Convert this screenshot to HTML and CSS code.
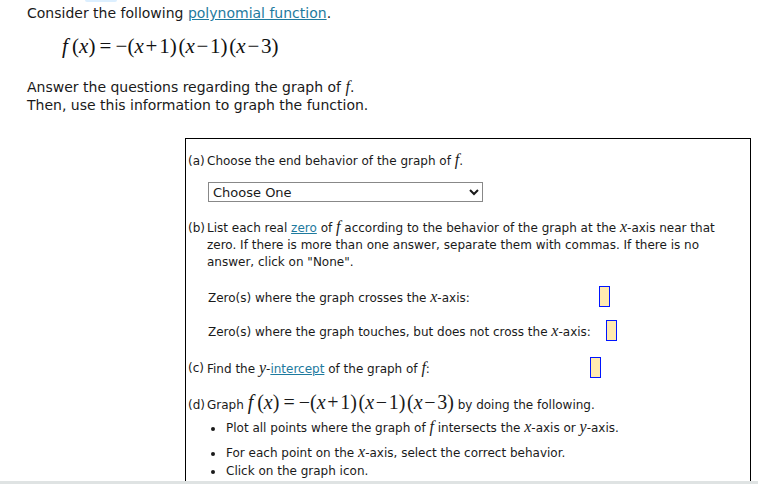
FILE: index.html
```html
<!DOCTYPE html>
<html>
<head>
  <title>Polynomial Function</title>
  <link rel="stylesheet" href="styles.css">
</head>
<body>
  <div class="focus-mark"></div>
  <div class="intro">
    <p class="line">Consider the following <a href="#" class="link">polynomial function</a>.</p>
    <div class="formula">
      <i>f</i>&#8201;(<i>x</i>)&#8201;=&#8201;&minus;(<i>x</i>&#8202;+&#8202;1)&#8202;(<i>x</i>&#8202;&minus;&#8202;1)&#8202;(<i>x</i>&#8202;&minus;&#8202;3)
    </div>
    <p class="line">Answer the questions regarding the graph of <i class="m">f</i>.</p>
    <p class="line">Then, use this information to graph the function.</p>
  </div>

  <div class="panel">
    <div class="part part-a">
      <span class="tag">(a)</span>
      <span>Choose the end behavior of the graph of <i class="m">f</i>.</span>
    </div>
    <select class="choose">
      <option>Choose One</option>
    </select>

    <div class="part part-b">
      <span class="tag">(b)</span>
      <span>List each real <a href="#" class="link">zero</a> of <i class="m">f</i> according to the behavior of the graph at the <i class="m">x</i>-axis near that
        zero. If there is more than one answer, separate them with commas. If there is no answer, click on "None".</span>
    </div>

    <div class="zero-row">
      <span class="zero-label crosses">Zero(s) where the graph crosses the <i class="m">x</i>-axis:</span>
      <span class="box"></span>
    </div>
    <div class="zero-row second">
      <span class="zero-label touches">Zero(s) where the graph touches, but does not cross the <i class="m">x</i>-axis:</span>
      <span class="box"></span>
    </div>

    <div class="part part-c">
      <span class="tag">(c)</span>
      <span class="intercept">Find the <i class="m">y</i>-<a href="#" class="link">intercept</a> of the graph of <i class="m">f</i>:</span>
      <span class="box"></span>
    </div>

    <div class="part part-d">
      <span class="tag">(d)</span>
      <span>Graph <span class="inline-formula"><i>f</i>&#8201;(<i>x</i>)&#8201;=&#8201;&minus;(<i>x</i>&#8202;+&#8202;1)&#8202;(<i>x</i>&#8202;&minus;&#8202;1)&#8202;(<i>x</i>&#8202;&minus;&#8202;3)</span> by doing the following.</span>
    </div>
    <ul class="steps">
      <li>Plot all points where the graph of <i class="m">f</i> intersects the <i class="m">x</i>-axis or <i class="m">y</i>-axis.</li>
      <li class="gap">For each point on the <i class="m">x</i>-axis, select the correct behavior.</li>
      <li>Click on the graph icon.</li>
    </ul>
  </div>
  <div class="bottom-bar"></div>
</body>
</html>
```

FILE: styles.css
```css
body {
  margin: 0;
  padding: 0 0 0 27px;
  font-family: "DejaVu Sans", Verdana, sans-serif;
  font-size: 14px;
  color: #1a1a1a;
  background-color: #fff;
  height: 484px;
  overflow: hidden;
  position: relative;
}
.focus-mark {
  position: absolute;
  left: 85px;
  top: 0;
  width: 32px;
  height: 2px;
  background-color: #dcefff;
  border-radius: 0 0 4px 4px;
}
.intro {
  padding-top: 4px;
}
.line {
  margin: 0;
  line-height: 18px;
}
.link {
  color: #1e7a9e;
  text-decoration: underline;
}
.m {
  font-family: "Liberation Serif", "Times New Roman", serif;
  font-size: 16px;
}
.formula {
  font-family: "Liberation Serif", "Times New Roman", serif;
  font-size: 21px;
  margin: 11px 0 19px 35px;
  height: 26px;
  line-height: 26px;
  color: #111;
}
.panel {
  margin: 24px 0 0 158px;
  width: 562px;
  height: 400px;
  border: 1px solid #000;
  font-size: 12px;
  padding-left: 2px;
}
.part {
  display: flex;
  align-items: baseline;
  margin-top: 12px;
}
.part-a {
  margin-top: 12px;
}
.tag {
  width: 19px;
  flex: none;
}
.choose {
  display: block;
  margin: 13px 0 0 20px;
  width: 275px;
  height: 20px;
  font-family: "DejaVu Sans", Verdana, sans-serif;
  font-size: 13px;
  color: #1a1a1a;
  border: 1px solid #888;
  background-color: #fff;
  padding: 0;
}
.part-b {
  margin-top: 16px;
  line-height: 17px;
}
.part-b span:last-child {
  padding-right: 20px;
}
.zero-row {
  display: flex;
  align-items: center;
  margin: 15px 0 0 20px;
  height: 21px;
}
.zero-row.second {
  margin-top: 13px;
}
.zero-label.crosses {
  width: 383px;
}
.zero-label.touches {
  width: 390px;
}
.zero-label {
  margin-right: 8px;
  flex: none;
}
.box {
  display: inline-block;
  width: 9px;
  height: 19px;
  border: 1px solid #0014ff;
  background-color: #ffeab0;
  flex: none;
}
.part-c {
  margin-top: 16px;
  align-items: center;
}
.intercept {
  width: 383px;
}
.part-d {
  margin-top: 13px;
}
.inline-formula {
  font-family: "Liberation Serif", "Times New Roman", serif;
  font-size: 20px;
}
.steps {
  margin: 4px 0 0 0;
  padding-left: 37px;
  line-height: 18px;
}
.steps li {
  padding-left: 1px;
}
.steps li.gap {
  margin-top: 6px;
}
.bottom-bar {
  position: absolute;
  left: 0;
  right: 0;
  bottom: 0;
  height: 3px;
  background-color: #dfe3e3;
}
```
